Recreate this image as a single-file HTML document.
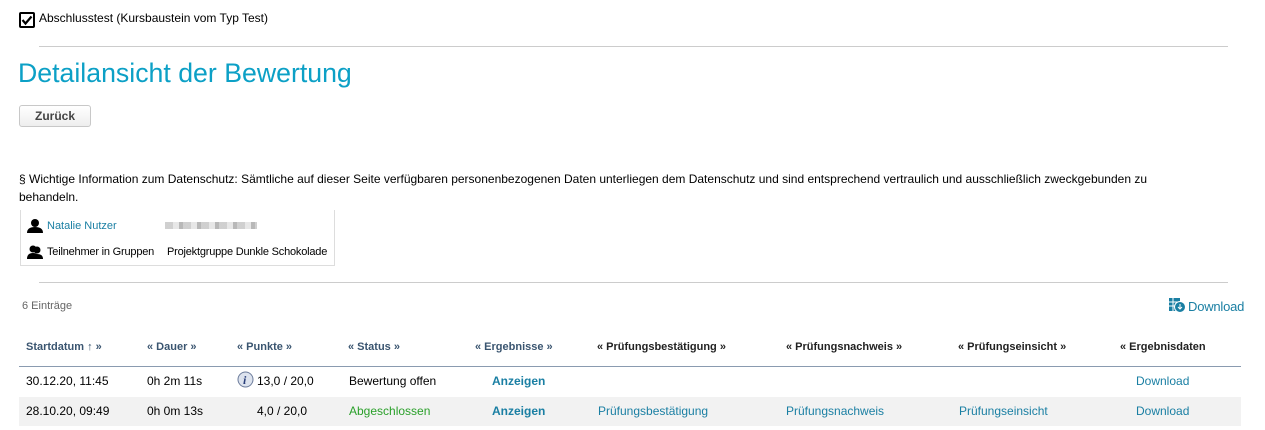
<!DOCTYPE html>
<html><head><meta charset="utf-8"><style>
body{margin:0;width:1265px;height:430px;background:#fff;font-family:"Liberation Sans",Arial,sans-serif;font-size:12px;color:#000;position:relative;overflow:hidden}
.a{position:absolute;white-space:nowrap}
.l{color:#1a7fa3}
.h{font-weight:bold;color:#3a5570;font-size:11px}
.hd{font-weight:bold;color:#222;font-size:11px}
</style></head><body>
<div class="a" style="left:19px;top:12px;width:16px;height:16px;border:2px solid #000;border-radius:2px;box-sizing:border-box"></div>
<svg class="a" style="left:21px;top:14px" width="12" height="12"><path d="M1.5 6 L4.5 9.5 L10.5 2.5" stroke="#000" stroke-width="2.2" fill="none"/></svg>
<div class="a" style="left:39px;top:11px">Abschlusstest (Kursbaustein vom Typ Test)</div>
<div class="a" style="left:39px;top:46px;width:1189px;height:1px;background:#ccc"></div>
<div class="a" style="left:18px;top:58px;font-size:26.7px;color:#0ca0c6">Detailansicht der Bewertung</div>
<div class="a" style="left:19px;top:105px;width:72px;height:22px;border:1px solid #c8c8c8;border-radius:3px;background:linear-gradient(#fff,#eee);box-sizing:border-box;text-align:center;line-height:20px;font-weight:bold;color:#444">Zurück</div>
<div class="a" style="left:19px;top:170px;line-height:18px">§ Wichtige Information zum Datenschutz: Sämtliche auf dieser Seite verfügbaren personenbezogenen Daten unterliegen dem Datenschutz und sind entsprechend vertraulich und ausschließlich zweckgebunden zu<br>behandeln.</div>
<div class="a" style="left:20px;top:210px;width:315px;height:56px;border:1px solid #ddd;border-top:none;box-sizing:border-box"></div>
<svg class="a" style="left:27px;top:219px" width="16" height="14"><circle cx="8" cy="4" r="4"/><path d="M0 14 Q0 8 8 8 Q16 8 16 14Z"/></svg>
<div class="a l" style="left:47px;top:220px;font-size:11px">Natalie Nutzer</div>
<div class="a" style="left:165px;top:222px;width:92px;height:7px;background:repeating-linear-gradient(90deg,#bbb 0 8px,#ddd 8px 14px,#999 14px 18px);opacity:.7"></div>
<svg class="a" style="left:27px;top:245px" width="16" height="14"><circle cx="6" cy="4" r="3.5"/><circle cx="10" cy="5" r="3.5"/><path d="M0 14 Q0 8 6 8 Q12 8 12 14Z"/><path d="M5 14 Q5 9 10 9 Q16 9 16 14Z"/></svg>
<div class="a" style="left:47px;top:246px;font-size:11px;letter-spacing:-0.2px">Teilnehmer in Gruppen</div>
<div class="a" style="left:167px;top:246px;font-size:11px;letter-spacing:-0.2px">Projektgruppe Dunkle Schokolade</div>
<div class="a" style="left:39px;top:282px;width:1189px;height:1px;background:#ccc"></div>
<div class="a" style="left:22px;top:300px;font-size:11px;color:#666">6 Einträge</div>
<svg class="a" style="left:1169px;top:298px" width="17" height="15"><rect x="0" y="0" width="11" height="13" fill="#1a7fa3"/><path d="M0 4H11M0 8H11M4 0V13" stroke="#fff"/><circle cx="11" cy="9" r="5.5" fill="#1a7fa3" stroke="#fff"/><path d="M11 6V11M9 9L11 11L13 9" stroke="#fff" fill="none"/></svg>
<div class="a l" style="left:1188px;top:299px;font-size:13px;letter-spacing:-0.2px">Download</div>
<div class="a h" style="left:26px;top:341px">Startdatum ↑ »</div>
<div class="a h" style="left:147px;top:341px">« Dauer »</div>
<div class="a h" style="left:237px;top:341px">« Punkte »</div>
<div class="a h" style="left:348px;top:341px">« Status »</div>
<div class="a h" style="left:475px;top:341px">« Ergebnisse »</div>
<div class="a hd" style="left:597px;top:341px">« Prüfungsbestätigung »</div>
<div class="a hd" style="left:786px;top:341px">« Prüfungsnachweis »</div>
<div class="a hd" style="left:958px;top:341px">« Prüfungseinsicht »</div>
<div class="a hd" style="left:1120px;top:341px">« Ergebnisdaten</div>
<div class="a" style="left:19px;top:366px;width:1222px;height:1px;background:#8a9bb0"></div>
<div class="a" style="left:19px;top:397px;width:1222px;height:29px;background:#f2f2f2"></div>
<div class="a" style="left:26px;top:374px">30.12.20, 11:45</div>
<div class="a" style="left:147px;top:374px">0h 2m 11s</div>
<svg class="a" style="left:237px;top:371px" width="17" height="17"><circle cx="8.5" cy="8.5" r="7.5" fill="#dde3ee" stroke="#6a7a9a"/><text x="6" y="13" font-family="Liberation Serif" font-style="italic" font-weight="bold" font-size="12" fill="#2a3f7a">i</text></svg>
<div class="a" style="left:257px;top:374px">13,0 / 20,0</div>
<div class="a" style="left:349px;top:374px">Bewertung offen</div>
<div class="a" style="left:492px;top:374px;font-weight:bold;color:#1a7fa3">Anzeigen</div>
<div class="a l" style="left:1136px;top:374px">Download</div>
<div class="a" style="left:26px;top:404px">28.10.20, 09:49</div>
<div class="a" style="left:147px;top:404px">0h 0m 13s</div>
<div class="a" style="left:257px;top:404px">4,0 / 20,0</div>
<div class="a" style="left:349px;top:404px;color:#2aa02a">Abgeschlossen</div>
<div class="a" style="left:492px;top:404px;font-weight:bold;color:#1a7fa3">Anzeigen</div>
<div class="a l" style="left:598px;top:404px">Prüfungsbestätigung</div>
<div class="a l" style="left:786px;top:404px">Prüfungsnachweis</div>
<div class="a l" style="left:959px;top:404px">Prüfungseinsicht</div>
<div class="a l" style="left:1136px;top:404px">Download</div>
</body></html>
